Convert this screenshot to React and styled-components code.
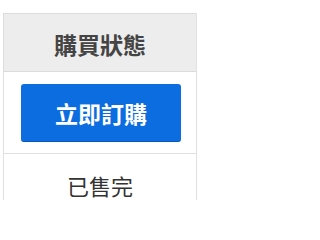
import React from 'react'
import styled, { createGlobalStyle } from 'styled-components'

const GlobalStyle = createGlobalStyle`
    html, body {
        margin:0;
        padding:0;
        background:#fff;
    }
    body {
        font-family:"Noto Sans CJK TC", "Noto Sans", sans-serif;
    }
`

const Page = styled.div`
    width:200px;
    height:200px;
    overflow:hidden;
    padding:13px 0px 0px 3px;
    box-sizing:border-box;
`

const Table = styled.table`
    width:194px;
    border-collapse:collapse;
`

const HeadCell = styled.th`
    height:57px;
    padding:0;
    border:1px solid #dcdcdc;
    border-right-color:#e2e2e2;
    background:#ededed;
    color:#444;
    font-size:23px;
    font-weight:700;
    text-align:center;
    vertical-align:middle;
    line-height:1;
`

const HeadText = styled.div`
    padding-top:4px;
`

const Cell = styled.td`
    height:${props => props.$height}px;
    padding:0;
    border:1px solid #e0e0e0;
    text-align:center;
    vertical-align:top;
    color:#333;
    font-size:22px;
`

const BuyButton = styled.button`
    display:flex;
    align-items:center;
    justify-content:center;
    width:160px;
    height:58px;
    margin:12px auto 0px 17px;
    padding:0;
    border:none;
    border-bottom:1px solid #0a56b8;
    border-radius:3px;
    background:#0b6de0;
    color:#fff;
    font-family:inherit;
    font-size:23px;
    font-weight:700;
    cursor:pointer;
`

const SoldOut = styled.div`
    padding-top:20px;
    line-height:1;
`

function App() {
    return (
        <Page>
            <GlobalStyle />
            <Table>
                <thead>
                    <tr>
                        <HeadCell><HeadText>購買狀態</HeadText></HeadCell>
                    </tr>
                </thead>
                <tbody>
                    <tr>
                        <Cell $height={81}>
                            <BuyButton>立即訂購</BuyButton>
                        </Cell>
                    </tr>
                    <tr>
                        <Cell $height={60}>
                            <SoldOut>已售完</SoldOut>
                        </Cell>
                    </tr>
                </tbody>
            </Table>
        </Page>
    )
}

export default App
